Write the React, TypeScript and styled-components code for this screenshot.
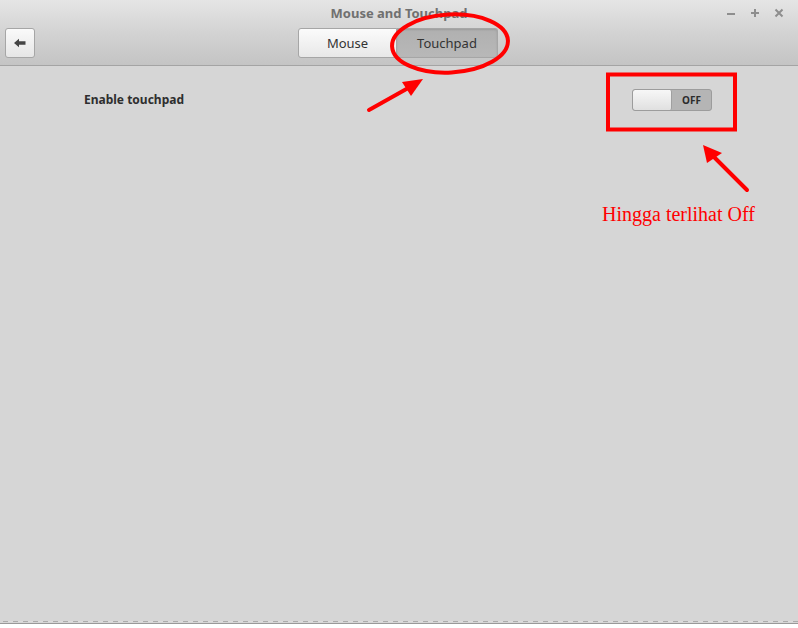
import React from "react";
import styled, { createGlobalStyle } from "styled-components";

const Global = createGlobalStyle`
  html, body { margin: 0; padding: 0; background: #ffffff; }
  body { font-family: "Noto Sans", "Open Sans", sans-serif; }
  #root { width: 798px; height: 628px; }
`;

const Window = styled.div`
  position: relative;
  width: 798px;
  height: 624px;
  display: flex;
  flex-direction: column;
  background: #d6d6d6;
  border-bottom: 1px solid #999999;
  box-sizing: border-box;
  overflow: hidden;
`;

const Header = styled.header`
  height: 66px;
  box-sizing: border-box;
  background: linear-gradient(to bottom, #e5e5e5 0%, #d3d3d3 50%, #c4c4c4 100%);
  border-bottom: 1px solid #a4a4a4;
  display: flex;
  flex-direction: column;
`;

const TitleBar = styled.div`
  height: 26px;
  display: grid;
  grid-template-columns: 1fr auto 1fr;
  align-items: center;
`;

const Title = styled.div`
  grid-column: 2;
  font-size: 13px;
  font-weight: 700;
  color: #707070;
  line-height: 24px;
`;

const Controls = styled.div`
  grid-column: 3;
  justify-self: end;
  display: flex;
  gap: 8px;
  padding-right: 11px;
  margin-top: -1px;
`;

const CtrlBtn = styled.span`
  width: 16px;
  height: 16px;
  display: flex;
  align-items: center;
  justify-content: center;
`;

const Toolbar = styled.div`
  margin-top: 2px;
  padding: 0 5px;
  display: grid;
  grid-template-columns: 1fr auto 1fr;
  align-items: center;
`;

const BackButton = styled.button`
  width: 30px;
  height: 30px;
  padding: 0;
  border: 1px solid #a6a6a6;
  border-radius: 3px;
  background: linear-gradient(to bottom, #fafafa, #e6e6e6);
  display: flex;
  align-items: center;
  justify-content: center;
  box-sizing: border-box;
`;

const Switcher = styled.div`
  display: flex;
  margin-left: -2px;
`;

const StackButton = styled.button<{ $active?: boolean; $first?: boolean }>`
  width: ${(p) => (p.$first ? "99px" : "101px")};
  height: 30px;
  box-sizing: border-box;
  border: 1px solid #a6a6a6;
  border-left-width: ${(p) => (p.$first ? "1px" : "0")};
  border-radius: ${(p) => (p.$first ? "3px 0 0 3px" : "0 3px 3px 0")};
  background: ${(p) =>
    p.$active
      ? "linear-gradient(to bottom, #b0b0b0, #b8b8b8)"
      : "linear-gradient(to bottom, #fbfbfb, #e8e8e8)"};
  box-shadow: ${(p) => (p.$active ? "inset 0 1px 2px rgba(0,0,0,0.12)" : "none")};
  font-family: "Noto Sans", sans-serif;
  font-size: 13px;
  color: #333333;
  padding: 0;
`;

const Body = styled.main`
  flex: 1;
  padding: 23px 86px 0 84px;
`;

const Row = styled.div`
  height: 22px;
  display: flex;
  align-items: center;
  justify-content: space-between;
`;

const Label = styled.span`
  font-size: 12px;
  font-weight: 700;
  color: #2e2e2e;
  margin-top: -1px;
`;

const Switch = styled.div`
  width: 80px;
  height: 22px;
  box-sizing: border-box;
  border: 1px solid #9c9c9c;
  border-radius: 3px;
  background: #b5b5b5;
  display: flex;
  overflow: hidden;
`;

const Knob = styled.div`
  width: 39px;
  height: 100%;
  box-sizing: border-box;
  background: linear-gradient(to bottom, #f7f7f7, #e0e0e0);
  border-right: 1px solid #a0a0a0;
  border-radius: 2px;
`;

const SwitchText = styled.span`
  flex: 1;
  display: flex;
  align-items: center;
  justify-content: center;
  font-size: 10px;
  font-weight: 700;
  color: #2c2c2c;
`;

const Footer = styled.div`
  height: 3px;
  margin: 0 0 0 3px;
  background: repeating-linear-gradient(
    to right,
    #acacac 0px,
    #acacac 5px,
    #dcdcdc 5px,
    #dcdcdc 10px
  );
  background-size: 100% 1px;
  background-repeat: no-repeat;
  background-position: 0 1px;
`;

const Overlay = styled.svg`
  position: absolute;
  left: 0;
  top: 0;
  width: 798px;
  height: 628px;
  pointer-events: none;
`;

const Note = styled.div`
  position: absolute;
  left: 602px;
  top: 203px;
  font-family: "Liberation Serif", serif;
  font-size: 20px;
  color: #ff0000;
  white-space: nowrap;
`;

export default function App() {
  return (
    <>
      <Global />
      <Window>
        <Header>
          <TitleBar>
            <Title>Mouse and Touchpad</Title>
            <Controls>
              <CtrlBtn>
                <svg width="10" height="10" viewBox="0 0 10 10">
                  <path d="M1 6 H9" stroke="#8e8e8e" strokeWidth="2" />
                </svg>
              </CtrlBtn>
              <CtrlBtn>
                <svg width="10" height="10" viewBox="0 0 10 10">
                  <path d="M1 5 H9 M5 1 V9" stroke="#8e8e8e" strokeWidth="2" />
                </svg>
              </CtrlBtn>
              <CtrlBtn>
                <svg width="10" height="10" viewBox="0 0 10 10">
                  <path d="M1.5 1.5 L8.5 8.5 M8.5 1.5 L1.5 8.5" stroke="#8e8e8e" strokeWidth="2" />
                </svg>
              </CtrlBtn>
            </Controls>
          </TitleBar>
          <Toolbar>
            <BackButton aria-label="Back">
              <svg width="28" height="28" viewBox="0 0 28 28">
                <path d="M8 14 L13 9.8 V12.2 H19.5 V15.8 H13 V18.2 Z" fill="#454545" />
              </svg>
            </BackButton>
            <Switcher>
              <StackButton $first>Mouse</StackButton>
              <StackButton $active>Touchpad</StackButton>
            </Switcher>
          </Toolbar>
        </Header>
        <Body>
          <Row>
            <Label>Enable touchpad</Label>
            <Switch>
              <Knob />
              <SwitchText>OFF</SwitchText>
            </Switch>
          </Row>
        </Body>
        <Footer />
      </Window>
      <Overlay viewBox="0 0 798 628">
        <ellipse cx="450" cy="43.5" rx="58" ry="29" fill="none" stroke="#ff0000" strokeWidth="4" transform="rotate(-3 450 43.5)" />
        <line x1="369" y1="110" x2="410" y2="87" stroke="#ff0000" strokeWidth="4" strokeLinecap="round" />
        <polygon points="423,79 402,82 411,96" fill="#ff0000" />
        <rect x="608" y="74.5" width="127" height="55" fill="none" stroke="#ff0000" strokeWidth="4" />
        <line x1="747" y1="190" x2="714" y2="157" stroke="#ff0000" strokeWidth="4" strokeLinecap="round" />
        <polygon points="703,145 707,163 722,153" fill="#ff0000" />
      </Overlay>
      <Note>Hingga terlihat Off</Note>
    </>
  );
}
